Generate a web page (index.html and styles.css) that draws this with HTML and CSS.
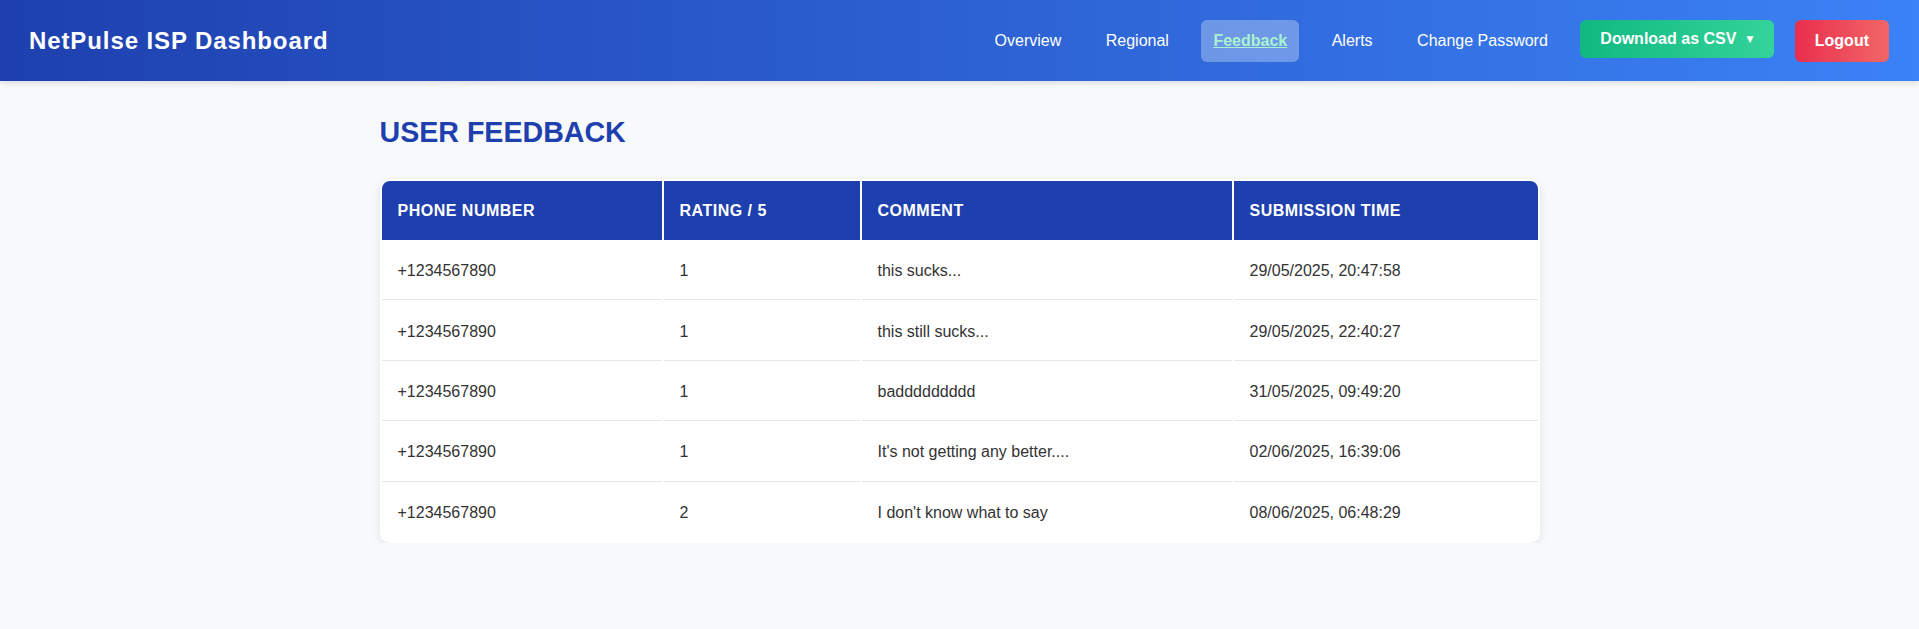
FILE: index.html
```html
<!DOCTYPE html>
<html lang="en">
<head>
<meta charset="utf-8">
<title>NetPulse ISP Dashboard</title>
<link rel="stylesheet" href="styles.css">
</head>
<body>
<header class="topbar">
  <div class="brand">NetPulse ISP Dashboard</div>
  <nav class="nav">
    <a class="nav-link" href="#">Overview</a>
    <a class="nav-link" href="#">Regional</a>
    <a class="nav-link active" href="#">Feedback</a>
    <a class="nav-link" href="#">Alerts</a>
    <a class="nav-link" href="#">Change Password</a>
    <div class="dropdown">
      <button class="btn btn-csv">Download as CSV<span class="caret">&#9660;</span></button>
    </div>
    <button class="btn btn-logout">Logout</button>
  </nav>
</header>
<main class="container">
  <h2 class="page-title">User Feedback</h2>
  <div class="table-card">
    <table class="feedback-table">
      <colgroup>
        <col class="col-phone">
        <col class="col-rating">
        <col class="col-comment">
        <col class="col-time">
      </colgroup>
      <thead>
        <tr>
          <th>Phone Number</th>
          <th>Rating / 5</th>
          <th>Comment</th>
          <th>Submission Time</th>
        </tr>
      </thead>
      <tbody>
        <tr><td>+1234567890</td><td>1</td><td>this sucks...</td><td>29/05/2025, 20:47:58</td></tr>
        <tr><td>+1234567890</td><td>1</td><td>this still sucks...</td><td>29/05/2025, 22:40:27</td></tr>
        <tr><td>+1234567890</td><td>1</td><td>baddddddddd</td><td>31/05/2025, 09:49:20</td></tr>
        <tr><td>+1234567890</td><td>1</td><td>It's not getting any better....</td><td>02/06/2025, 16:39:06</td></tr>
        <tr><td>+1234567890</td><td>2</td><td>I don't know what to say</td><td>08/06/2025, 06:48:29</td></tr>
      </tbody>
    </table>
  </div>
</main>
</body>
</html>
```

FILE: styles.css
```css
* { box-sizing: border-box; }

html, body {
  margin: 0;
  padding: 0;
}

body {
  font-family: "Liberation Sans", Arial, sans-serif;
  background: #f8f9fb;
  color: #333;
}

.topbar {
  height: 81px;
  display: flex;
  align-items: center;
  justify-content: space-between;
  padding: 0 30px 0 29px;
  background: linear-gradient(90deg, #1e40af 0%, #3b82f6 100%);
  box-shadow: 0 2px 6px rgba(0, 0, 0, 0.12);
}

.brand {
  color: #fff;
  font-size: 24px;
  font-weight: 700;
  letter-spacing: 0.9px;
  line-height: 28px;
}

.nav {
  display: flex;
  align-items: flex-start;
  gap: 20.5px;
}

.nav-link {
  display: block;
  color: #fff;
  text-decoration: none;
  font-size: 16px;
  line-height: 18px;
  padding: 12px 12px;
  border-radius: 6px;
}

.nav-link.active {
  background: rgba(255, 255, 255, 0.3);
  color: #a7f3d0;
  font-weight: 700;
  text-decoration: underline;
}

.dropdown {
  display: block;
}

.btn {
  font-family: "Liberation Sans", Arial, sans-serif;
  font-size: 16px;
  font-weight: 700;
  line-height: 18px;
  color: #fff;
  border: none;
  border-radius: 6px;
  cursor: pointer;
  display: block;
}

.btn-csv {
  padding: 10px 21px 10px 20px;
  background: linear-gradient(90deg, #10b981 0%, #34d399 100%);
}

.caret {
  display: inline-block;
  font-family: "DejaVu Sans", sans-serif;
  font-size: 9px;
  margin-left: 10px;
  vertical-align: 2px;
}

.btn-logout {
  padding: 12px 20px;
  background: linear-gradient(90deg, #e92e4d 0%, #f16767 100%);
}

.container {
  max-width: 1160px;
  margin: 0 auto;
  padding-top: 35px;
}

.page-title {
  margin: 0 0 30px;
  font-size: 28.6px;
  line-height: 33px;
  font-weight: 700;
  color: #1e40af;
  text-transform: uppercase;
}

.table-card {
  background: #fff;
  border-radius: 10px;
  box-shadow: 0 3px 10px rgba(0, 0, 0, 0.09);
  overflow: hidden;
}

.feedback-table {
  width: 100%;
  table-layout: fixed;
  border-collapse: separate;
  border-spacing: 2px;
}

.col-phone { width: 280px; }
.col-rating { width: 196px; }
.col-comment { width: 370px; }
.col-time { width: 304px; }

.feedback-table th {
  background: #1e40af;
  color: #fff;
  text-align: left;
  font-size: 16px;
  font-weight: 700;
  letter-spacing: 0.5px;
  text-transform: uppercase;
  line-height: 20px;
  padding: 19.5px 16px;
}

.feedback-table th:first-child { border-top-left-radius: 8px; }
.feedback-table th:last-child { border-top-right-radius: 8px; }

.feedback-table td {
  font-size: 16px;
  line-height: 19px;
  padding: 19.2px 16px;
  color: #333;
  border-bottom: 1px solid #e6e6e6;
}

.feedback-table tbody tr:last-child td {
  border-bottom: none;
}
```
